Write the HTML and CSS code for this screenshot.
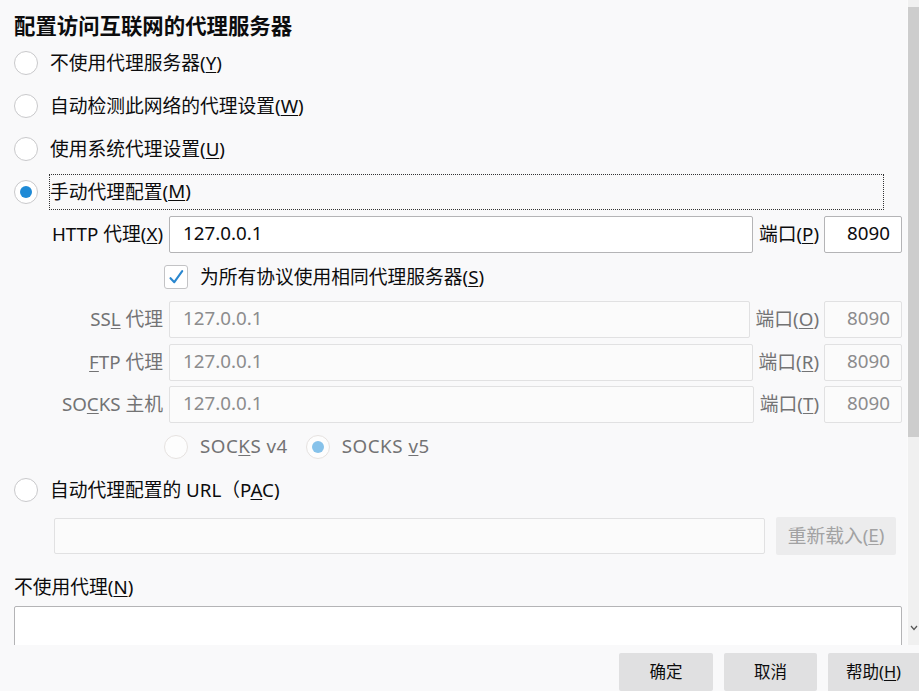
FILE: index.html
```html
<!DOCTYPE html>
<html lang="zh-CN">
<head>
<meta charset="utf-8">
<title>连接设置</title>
<link rel="stylesheet" href="styles.css">
</head>
<body>
<div class="window">
  <div class="viewport">
    <div class="content">
      <h1 class="title">配置访问互联网的代理服务器</h1>
      <div class="opt"><span class="radio"></span><span class="lbl">不使用代理服务器(<u>Y</u>)</span></div>
      <div class="opt"><span class="radio"></span><span class="lbl">自动检测此网络的代理设置(<u>W</u>)</span></div>
      <div class="opt"><span class="radio"></span><span class="lbl">使用系统代理设置(<u>U</u>)</span></div>
      <div class="opt"><span class="radio checked"></span><span class="lbl focus">手动代理配置(<u>M</u>)</span></div>

      <div class="manual">
        <div class="prow">
          <span class="plabel">HTTP 代理(<u>X</u>)</span>
          <span class="field host">127.0.0.1</span>
          <span class="portlbl">端口(<u>P</u>)</span>
          <span class="field port">8090</span>
        </div>
        <div class="checkrow">
          <span class="check"><svg width="22" height="22" viewBox="0 0 22 22"><path d="M5.5 12.2 L9.3 16.2 L17.2 5.2" fill="none" stroke="#2a87cf" stroke-width="2.1" stroke-linecap="round" stroke-linejoin="round"/></svg></span>
          <span class="clbl">为所有协议使用相同代理服务器(<u>S</u>)</span>
        </div>
        <div class="prow off">
          <span class="plabel">SS<u>L</u> 代理</span>
          <span class="field host">127.0.0.1</span>
          <span class="portlbl">端口(<u>O</u>)</span>
          <span class="field port">8090</span>
        </div>
        <div class="prow off">
          <span class="plabel"><u>F</u>TP 代理</span>
          <span class="field host">127.0.0.1</span>
          <span class="portlbl">端口(<u>R</u>)</span>
          <span class="field port">8090</span>
        </div>
        <div class="prow off tight">
          <span class="plabel">SO<u>C</u>KS 主机</span>
          <span class="field host">127.0.0.1</span>
          <span class="portlbl">端口(<u>T</u>)</span>
          <span class="field port">8090</span>
        </div>
        <div class="verrow">
          <span class="radio off"></span><span class="vlbl">SOC<u>K</u>S v4</span>
          <span class="radio off checked"></span><span class="vlbl">SOCKS <u>v</u>5</span>
        </div>
      </div>

      <div class="opt"><span class="radio"></span><span class="lbl">自动代理配置的 URL（P<u>A</u>C)</span></div>
      <div class="pacrow">
        <span class="field pacurl"></span>
        <span class="reload">重新载入(<u>E</u>)</span>
      </div>
      <div class="nolbl">不使用代理(<u>N</u>)</div>
      <div class="textarea"></div>
    </div>
    <div class="scrollbar">
      <div class="thumb"></div>
      <svg class="chev" width="8" height="6" viewBox="0 0 8 6"><path d="M1 1 L4 4.5 L7 1" fill="none" stroke="#555" stroke-width="1.2"/></svg>
    </div>
  </div>
  <div class="footer">
    <button class="btn ok">确定</button>
    <button class="btn cancel">取消</button>
    <button class="btn help">帮助(<u>H</u>)</button>
  </div>
</div>
</body>
</html>
```

FILE: styles.css
```css
* { box-sizing: border-box; }
html, body { margin: 0; padding: 0; }
body {
  background: #f9f9fa;
  color: #0c0c0d;
  font-family: "Noto Sans", "Noto Sans CJK SC", sans-serif;
  font-size: 18.75px;
  width: 919px;
  height: 691px;
  overflow: hidden;
}
u { text-underline-offset: 2px; }
.window { display: flex; flex-direction: column; height: 691px; }
.viewport { display: flex; height: 645px; overflow: hidden; flex: none; }
.content { flex: 1; min-width: 0; padding-left: 14px; }
.title {
  margin: 0;
  height: 45px;
  padding-top: 9px;
  line-height: 34px;
  font-size: 21.4px;
  font-weight: 700;
  white-space: nowrap;
}
.opt { display: flex; align-items: center; height: 36px; margin-top: 7px; white-space: nowrap; }
.title + .opt { margin-top: 0; }
.radio {
  width: 24px; height: 24px; flex: none;
  border: 1px solid #c9c9cb; border-radius: 50%;
  background: #fff;
  display: flex; align-items: center; justify-content: center;
}
.radio.checked::after {
  content: ""; width: 12px; height: 12px; border-radius: 50%; background: #1e8ad6;
}
.radio.off { border-color: #e6e2e0; background: #fdfdfd; }
.radio.off.checked::after { background: #86c2ea; }
.lbl, .plabel, .portlbl, .clbl, .vlbl { padding-bottom: 4px; }
.opt .lbl { margin-left: 12px; }
.opt .lbl.focus {
  margin-left: 11px; margin-right: 23px; flex: 1; align-self: stretch;
  border: 1px dotted #333; display: flex; align-items: center;
}
.manual { margin: 6px 5px 0 35px; }
.prow { display: flex; align-items: center; height: 37px; margin-top: 6px; white-space: nowrap; }
.manual .prow:first-child { margin-top: 0; }
.prow.tight { margin-top: 5px; }
.plabel { width: 114px; flex: none; text-align: right; margin-right: 6px; }
.field {
  height: 37px; border: 1px solid #b4b4b6; border-radius: 2px; background: #fff;
  padding: 0 13px 4px; display: flex; align-items: center;
}
.host { flex: 1; min-width: 0; }
.portlbl { margin: 0 5px 0 6px; flex: none; }
.port { width: 78px; flex: none; justify-content: flex-end; padding-right: 11px; }
.off .plabel, .off .portlbl { color: #737374; }
.off .field { background: #fbfbfb; border-color: #e1e1e2; color: #8c8c8d; }
.checkrow { display: flex; align-items: center; height: 36px; margin-top: 6px; padding-left: 115px; white-space: nowrap; }
.check {
  width: 24px; height: 24px; flex: none; margin-right: 12px;
  border: 1px solid #c3c3c5; border-radius: 3px; background: #fff;
  display: flex; align-items: center; justify-content: center;
}
.verrow { display: flex; align-items: center; height: 36px; margin-top: 6px; padding-left: 115px; white-space: nowrap; color: #737374; }
.vlbl { margin-left: 12px; margin-right: 18px; letter-spacing: 0.5px; }
.pacrow { display: flex; align-items: center; height: 38px; margin: 9px 11px 0 40px; }
.pacurl { flex: 1; height: 36px; background: #fbfbfb; border-color: #e1e1e2; }
.reload {
  width: 120px; height: 38px; flex: none; margin-left: 11px; padding-bottom: 4px;
  background: #ececed; color: #a2a2a3; border-radius: 2px;
  display: flex; align-items: center; justify-content: center; white-space: nowrap;
}
.nolbl { margin-top: 19px; line-height: 26px; padding-bottom: 2px; }
.textarea { margin: 4px 5px 0 0; height: 60px; border: 1px solid #b4b4b6; border-radius: 2px; background: #fff; }
.scrollbar { width: 12px; flex: none; background: #f0f0f0; border-left: 1px solid #fbfbfb; display: flex; flex-direction: column; align-items: flex-start; }
.thumb { margin-top: 7px; width: 11px; height: 430px; background: #cdcdcd; }
.chev { margin-top: 188px; margin-left: 2px; }
.footer {
  height: 46px; flex: none; display: flex; justify-content: flex-end; gap: 11px;
  padding-top: 8px; overflow: hidden;
}
.btn {
  height: 38px; border: none; border-radius: 2px; background: #e0e0e1; color: #0c0c0d;
  font-family: inherit; font-size: 16.5px; padding: 0 0 3px; flex: none;
}
.ok { width: 94px; }
.cancel { width: 93px; }
.help { width: 91px; border-radius: 2px 0 0 0; }
```
